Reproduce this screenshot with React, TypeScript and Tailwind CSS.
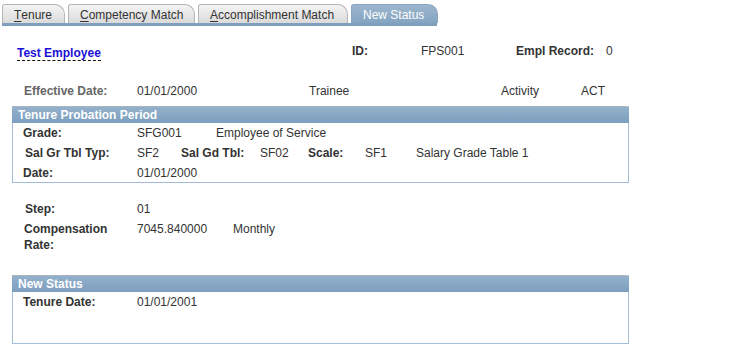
import React from "react";

const tabs = [
  { first: "T", rest: "enure", w: "w-[63px]" },
  { first: "C", rest: "ompetency Match", w: "w-[127px]" },
  { first: "A", rest: "ccomplishment Match", w: "w-[150px]" },
];

const Label = ({ children, className = "" }: { children: React.ReactNode; className?: string }) => (
  <span className={`font-bold text-[#333] ${className}`}>{children}</span>
);

const App: React.FC = () => {
  return (
    <div
      className="w-[730px] h-[361px] bg-white text-[12px] text-[#333] relative overflow-hidden"
      style={{ fontFamily: "Arial, 'Liberation Sans', sans-serif" }}
    >
      {/* Tabs */}
      <div className="pl-[2px] pt-[4px]">
        <div className="flex items-end gap-[3px] h-[19px]">
          {tabs.map((t) => (
            <div
              key={t.first}
              className={`${t.w} h-[19px] flex items-center pl-[11px] pt-[1px] text-[12px] text-[#333] bg-gradient-to-b from-[#f4f4f4] to-[#dadada] border border-b-0 border-[#b5b5b5] rounded-tl-[3px] rounded-tr-[10px]`}
            >
              <span className="underline decoration-1 underline-offset-2">{t.first}</span>
              {t.rest}
            </div>
          ))}
          <div className="w-[87px] h-[19px] flex items-center pl-[11px] pt-[1px] text-[12px] text-white bg-gradient-to-b from-[#9cb6cd] to-[#84a4c2] border border-b-0 border-[#8aa6c0] rounded-tl-[3px] rounded-tr-[10px]">
            New Status
          </div>
        </div>
        <div className="w-[435px] h-[3px] bg-[#7f9fbd]" />
      </div>

      {/* Header line */}
      <div className="flex items-center h-[16px] mt-[19px]">
        <span className="ml-[17px] font-bold text-[#1a0fd6] border-b border-dashed border-[#111] leading-[14px]">
          Test Employee
        </span>
      </div>
      <div className="absolute top-[43px] left-[352px] flex items-center h-[16px]">
        <Label className="w-[69px]">ID:</Label>
        <span className="w-[95px]">FPS001</span>
        <Label className="w-[90px]">Empl Record:</Label>
        <span>0</span>
      </div>

      {/* Effective date row */}
      <div className="flex items-center h-[16px] mt-[22px] pl-[24px]">
        <span className="w-[113px] font-bold text-[#666]">Effective Date:</span>
        <span className="w-[172px]">01/01/2000</span>
        <span className="w-[192px]">Trainee</span>
        <span className="w-[80px]">Activity</span>
        <span>ACT</span>
      </div>

      {/* Tenure Probation Period */}
      <div className="ml-[12px] mt-[7px] w-[617px] h-[77px] border border-[#a3bdd8] border-t-0">
        <div className="h-[17px] -mx-[1px] bg-gradient-to-b from-[#93b1cb] to-[#7d9ebf] border-t border-[#a9b3bd] rounded-tr-[3px] flex items-center pl-[6px] font-bold text-white">
          Tenure Probation Period
        </div>
        <div className="flex items-center h-[20px] pl-[10px]">
          <Label className="w-[114px]">Grade:</Label>
          <span className="w-[79px]">SFG001</span>
          <span>Employee of Service</span>
        </div>
        <div className="flex items-center h-[20px] pl-[12px]">
          <Label className="w-[112px]">Sal Gr Tbl Typ:</Label>
          <span className="w-[44px]">SF2</span>
          <Label className="w-[79px]">Sal Gd Tbl:</Label>
          <span className="w-[48px]">SF02</span>
          <Label className="w-[57px]">Scale:</Label>
          <span className="w-[51px]">SF1</span>
          <span>Salary Grade Table 1</span>
        </div>
        <div className="flex items-center h-[20px] pl-[10px]">
          <Label className="w-[114px]">Date:</Label>
          <span>01/01/2000</span>
        </div>
      </div>

      {/* Step / Compensation */}
      <div className="flex items-center h-[16px] mt-[18px] pl-[25px]">
        <Label className="w-[112px]">Step:</Label>
        <span>01</span>
      </div>
      <div className="flex items-start mt-[4px] pl-[24px] leading-[16px]">
        <Label className="w-[113px]">
          Compensation
          <br />
          Rate:
        </Label>
        <span className="w-[96px]">7045.840000</span>
        <span>Monthly</span>
      </div>

      {/* New Status */}
      <div className="ml-[12px] mt-[22px] w-[617px] h-[69px] border border-[#a3bdd8] border-t-0">
        <div className="h-[17px] -mx-[1px] bg-gradient-to-b from-[#93b1cb] to-[#7d9ebf] border-t border-[#a9b3bd] rounded-tr-[3px] flex items-center pl-[6px] font-bold text-white">
          New Status
        </div>
        <div className="flex items-center h-[19px] pl-[10px]">
          <Label className="w-[114px]">Tenure Date:</Label>
          <span>01/01/2001</span>
        </div>
      </div>
    </div>
  );
};

export default App;
